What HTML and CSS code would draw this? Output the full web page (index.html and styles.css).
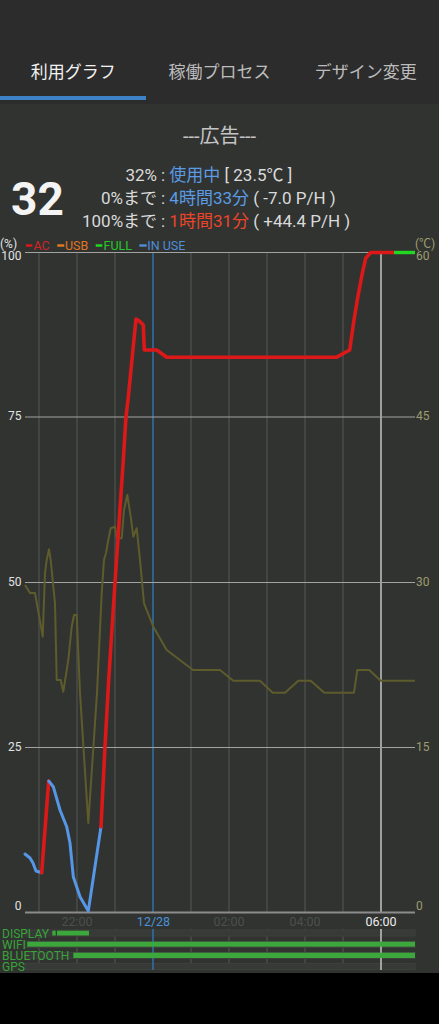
FILE: index.html
```html
<!DOCTYPE html>
<html lang="ja">
<head>
<meta charset="utf-8">
<title>利用グラフ</title>
<link rel="stylesheet" href="styles.css">
</head>
<body>
<div class="app">
  <header class="header">
    <div class="statusbar"></div>
    <nav class="tabs">
      <div class="tab active">利用グラフ</div>
      <div class="tab">稼働プロセス</div>
      <div class="tab">デザイン変更</div>
    </nav>
  </header>
  <div class="ad">---広告---</div>
  <section class="info">
    <div class="big">32</div>
    <div class="label">32%</div>
    <div class="val">: <span class="blue">使用中</span> [ 23.5℃ ]</div>
    <div class="label">0%まで</div>
    <div class="val">: <span class="blue">4時間33分</span> ( -7.0 P/H )</div>
    <div class="label">100%まで</div>
    <div class="val">: <span class="red">1時間31分</span> ( +44.4 P/H )</div>
  </section>
  <svg class="chart" width="439" height="740" viewBox="0 233 439 740" xmlns="http://www.w3.org/2000/svg">
    <g class="vgrid">
      <line x1="39" y1="252" x2="39" y2="912"/><line x1="39" y1="929" x2="39" y2="970"/>
      <line x1="77" y1="252" x2="77" y2="912"/><line x1="77" y1="929" x2="77" y2="970"/>
      <line x1="115" y1="252" x2="115" y2="912"/><line x1="115" y1="929" x2="115" y2="970"/>
      <line x1="191" y1="252" x2="191" y2="912"/><line x1="191" y1="929" x2="191" y2="970"/>
      <line x1="229" y1="252" x2="229" y2="912"/><line x1="229" y1="929" x2="229" y2="970"/>
      <line x1="267" y1="252" x2="267" y2="912"/><line x1="267" y1="929" x2="267" y2="970"/>
      <line x1="305" y1="252" x2="305" y2="912"/><line x1="305" y1="929" x2="305" y2="970"/>
      <line x1="343" y1="252" x2="343" y2="912"/><line x1="343" y1="929" x2="343" y2="970"/>
    </g>
    <g class="tracks">
      <rect x="25" y="930" width="390" height="6"/>
      <rect x="25" y="941.5" width="390" height="6"/>
      <rect x="25" y="952.5" width="390" height="6"/>
      <rect x="25" y="963.5" width="390" height="6"/>
    </g>
    <line class="vnow" x1="153" y1="252" x2="153" y2="912"/>
    <line class="vnow" x1="153" y1="929" x2="153" y2="970"/>
    <line class="vmark" x1="381" y1="252" x2="381" y2="912"/>
    <line class="vmark" x1="381" y1="929" x2="381" y2="970"/>
    <g class="hgrid">
      <line x1="25" y1="252.5" x2="415" y2="252.5"/>
      <line x1="25" y1="417" x2="415" y2="417"/>
      <line x1="25" y1="582.5" x2="415" y2="582.5"/>
      <line x1="25" y1="747.5" x2="415" y2="747.5"/>
    </g>
    <line class="base" x1="25" y1="912.5" x2="415" y2="912.5"/>
    <polyline class="temp" points="25,585 30,593 35,593 42.7,636.7 45,573 46.7,560 49,549.3 50.7,560 53.3,586.7 55,603.3 56.7,680 60.7,680 63.3,691.7 68.3,660 71.7,626.7 74,615 76.7,615 80,693 88.3,823 97,693 101.7,593.3 104,560 106,553 108.3,540 110.7,528.3 115,526.7 116.7,538.3 121.7,538.3 124,510 127.3,495 130.7,516.7 133.3,536.7 136.7,528.3 140,560 144,603.3 153.3,626.7 166.7,650 193,670 220,670 233.3,680.7 260,680.7 272.7,692.7 285,692.7 298.3,680.7 310.7,680.7 324.3,692.7 354,692.7 357.3,670 369.3,670 380.7,680.7 415,680.7"/>
    <polyline class="inuse" points="25,854 30,858 33,863 36,871 41.7,872.7"/>
    <polyline class="ac" points="41.7,872.7 48.7,781"/>
    <polyline class="inuse" points="48.7,781 53.3,786.7 60,810 66.7,826.7 70,843 73.3,876.7 80,896.7 88.3,911 101,826.7"/>
    <polyline class="ac" points="101,826.7 105,746.7 108.7,680 115,582.7 123.3,460 126,416.7 128,400 136,319 139.3,321 143.3,325 144.3,350 156.7,350 166.7,357.3 336.3,357.3 349.7,350 354,320 357.3,300 362.3,273.3 365.7,258.3 370.7,252.5 394,252.5"/>
    <line class="full" x1="394" y1="252.5" x2="415" y2="252.5"/>
    <g class="bars">
      <rect x="52.3" y="930.7" width="3.4" height="4.8"/>
      <rect x="57" y="930.7" width="32" height="4.8"/>
      <rect x="27.3" y="941.7" width="387.7" height="5"/>
      <rect x="73.3" y="952.7" width="341.7" height="5.3"/>
    </g>
    <text class="ax" x="0" y="247.5">(%)</text>
    <rect class="lg-ac" x="26" y="244.3" width="6.3" height="2.4"/>
    <text class="lt lt-ac" x="33.5" y="250">AC</text>
    <rect class="lg-usb" x="57.3" y="244.3" width="7" height="2.4"/>
    <text class="lt lt-usb" x="65" y="250">USB</text>
    <rect class="lg-full" x="95.7" y="244.3" width="6.6" height="2.4"/>
    <text class="lt lt-full" x="103.5" y="250">FULL</text>
    <rect class="lg-use" x="139.3" y="244.3" width="7.4" height="2.4"/>
    <text class="lt lt-use" x="147.3" y="250">IN USE</text>
    <g class="ax end">
      <text x="21.5" y="260">100</text>
      <text x="21.5" y="420">75</text>
      <text x="21.5" y="585.5">50</text>
      <text x="21.5" y="751">25</text>
      <text x="21.5" y="909.5">0</text>
    </g>
    <g class="axr">
      <text x="415" y="247.5">(℃)</text>
      <text x="416" y="260">60</text>
      <text x="416" y="420">45</text>
      <text x="416" y="585.5">30</text>
      <text x="416" y="751">15</text>
      <text x="416" y="909.5">0</text>
    </g>
    <g class="xl">
      <text class="dim" x="77" y="925.5">22:00</text>
      <text class="today" x="153.5" y="925.5">12/28</text>
      <text class="dim" x="229" y="925.5">02:00</text>
      <text class="dim" x="305" y="925.5">04:00</text>
      <text class="now" x="381" y="925.5">06:00</text>
    </g>
    <g class="st">
      <text x="2" y="937.5">DISPLAY</text>
      <text x="2" y="948.5">WIFI</text>
      <text x="2" y="959.5">BLUETOOTH</text>
      <text x="2" y="971">GPS</text>
    </g>
  </svg>
  <div class="navbar"></div>
</div>
</body>
</html>
```
FILE: styles.css
```css
html, body {
  margin: 0;
  padding: 0;
  background: #000;
}
.app {
  width: 439px;
  height: 1024px;
  display: flex;
  flex-direction: column;
  background: #313331;
  font-family: Roboto, "Noto Sans CJK JP", sans-serif;
  color: #d8d8d8;
  overflow: hidden;
}
.header {
  background: #2c2c2c;
  padding-bottom: 4px;
}
.statusbar {
  height: 44px;
}
.tabs {
  display: flex;
  height: 56px;
}
.tab {
  flex: 1;
  display: flex;
  align-items: center;
  justify-content: center;
  font-size: 17px;
  color: #bcbcbc;
  box-sizing: border-box;
  border-bottom: 4px solid transparent;
}
.tab.active {
  color: #f2f2f2;
  border-bottom-color: #3d82c6;
}
.ad {
  height: 60px;
  display: flex;
  align-items: center;
  justify-content: center;
  font-size: 20px;
  color: #c4c4c4;
}
.info {
  display: grid;
  grid-template-columns: 82px 75px 1fr;
  grid-template-rows: repeat(3, 23px);
  height: 69px;
  font-size: 17px;
  line-height: 23px;
  white-space: nowrap;
}
.big {
  grid-row: 1 / 4;
  grid-column: 1;
  align-self: center;
  padding-left: 11px;
  font-size: 46px;
  font-weight: 700;
  line-height: 1;
  color: #f4f4f4;
}
.label {
  text-align: right;
  color: #dadada;
}
.val {
  padding-left: 4px;
  color: #dadada;
}
.blue { color: #5b9be6; }
.red { color: #e8452a; }
.chart {
  display: block;
  flex: none;
}
.navbar {
  flex: 1;
  background: #000;
}
.vgrid line { stroke: #4a4d4a; stroke-width: 1.5; }
.vnow { stroke: #2f6ea6; stroke-width: 1.6; }
.vmark { stroke: #c4c4c4; stroke-width: 1.5; }
.hgrid line { stroke: #a2a2a2; stroke-width: 1.2; }
.base { stroke: #8c8c8c; stroke-width: 2; }
.tracks rect { fill: #373a37; stroke: #3d403d; stroke-width: 1; }
.temp { fill: none; stroke: #5f5c2c; stroke-width: 2; stroke-linejoin: round; }
.ac { fill: none; stroke: #dc1818; stroke-width: 3.6; stroke-linejoin: round; stroke-linecap: round; }
.inuse { fill: none; stroke: #5597e6; stroke-width: 3; stroke-linejoin: round; stroke-linecap: round; }
.full { stroke: #22d822; stroke-width: 3.4; }
.bars rect { fill: #3ca83c; }
.ax text, text.ax { font: 12px Roboto, sans-serif; fill: #e2e2e2; }
.end text { text-anchor: end; }
.axr text { font: 12px Roboto, "Noto Sans CJK JP", sans-serif; fill: #9e9c6e; }
.lt { font: 12.5px Roboto, sans-serif; }
.lt-ac { fill: #d52424; }
.lg-ac { fill: #e01818; }
.lt-usb { fill: #e07524; }
.lg-usb { fill: #e87a1e; }
.lt-full { fill: #26c826; }
.lg-full { fill: #22dd22; }
.lt-use { fill: #4f8ed6; }
.lg-use { fill: #4f8ed6; }
.xl text { font: 12.5px Roboto, sans-serif; text-anchor: middle; }
.xl .dim { fill: #4c504c; }
.xl .today { fill: #4a92dc; }
.xl .now { fill: #ececec; }
.st text { font: 12px Roboto, sans-serif; fill: #3aa43a; }
```
